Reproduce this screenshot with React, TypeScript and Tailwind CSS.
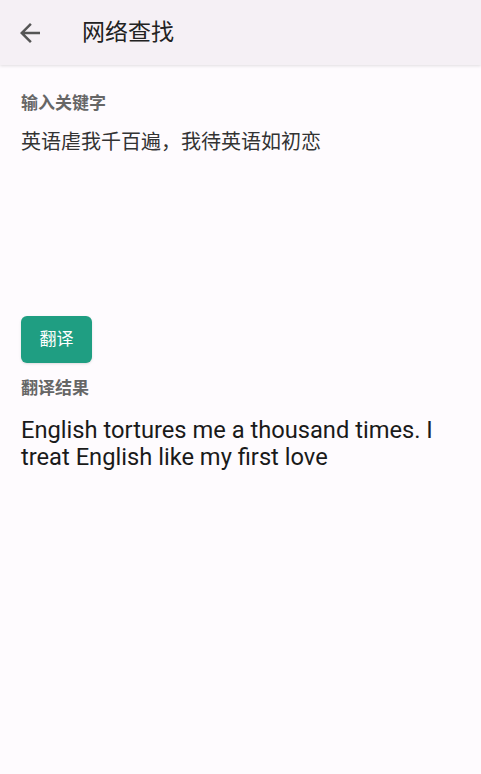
export default function App() {
  const font = { fontFamily: "Roboto, 'Noto Sans CJK SC', sans-serif" };
  return (
    <div className="w-[481px] h-[774px] bg-[#fefbfe] flex flex-col" style={font}>
      <header className="h-[65px] bg-[#f5f0f5] flex items-center shadow-[0_1px_3px_rgba(0,0,0,0.12)] relative z-10">
        <button className="ml-[15px] w-[30px] h-[30px] flex items-center justify-center">
          <svg viewBox="0 0 24 24" className="w-[30px] h-[30px]" fill="#555">
            <path d="M20 11H7.83l5.59-5.59L12 4l-8 8 8 8 1.41-1.41L7.83 13H20v-2z" />
          </svg>
        </button>
        <h1 className="ml-[37px] text-[23px] text-[#222] leading-none">网络查找</h1>
      </header>
      <main className="px-[21px] flex flex-col">
        <div className="mt-[27px] text-[17px] font-bold text-[#666] leading-[22px]">输入关键字</div>
        <div className="mt-[15px] text-[20px] text-[#333] leading-[26px]">英语虐我千百遍，我待英语如初恋</div>
        <div className="h-[161px]" />
        <button className="w-[71px] h-[47px] rounded-[6px] bg-[#1f9e82] text-white text-[17px] flex items-center justify-center shadow-sm">
          翻译
        </button>
        <div className="mt-[14px] text-[17px] font-bold text-[#666] leading-[22px]">翻译结果</div>
        <p className="mt-[18px] text-[23.7px] text-[#1a1a1a] leading-[27px]">
          English tortures me a thousand times. I treat English like my first love
        </p>
      </main>
    </div>
  );
}
